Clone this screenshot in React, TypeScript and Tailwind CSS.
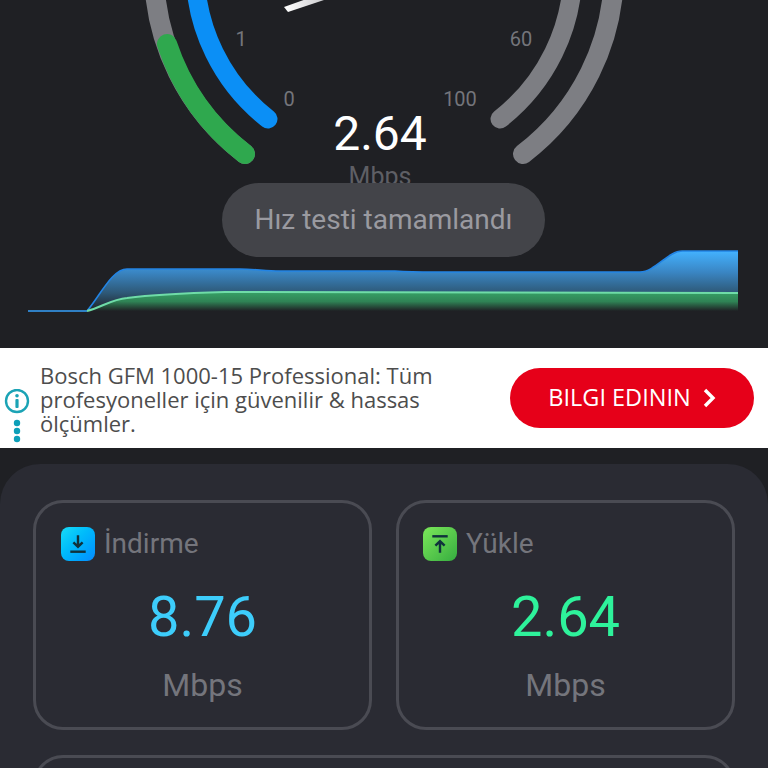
import React from "react";

function Gauge() {
  return (
    <svg width="768" height="250" viewBox="0 0 768 250" className="block" fill="none">
      <defs>
        <linearGradient id="needle" gradientUnits="userSpaceOnUse" x1="285" y1="10" x2="325" y2="-4">
          <stop offset="0" stopColor="#ffffff" />
          <stop offset="1" stopColor="#c9c9cc" />
        </linearGradient>
      </defs>
      <path d="M245 154 A231 231 0 0 1 154 -30" stroke="#7d7e83" strokeWidth="20" strokeLinecap="round" />
      <path d="M245 154 A231 231 0 0 1 167 44" stroke="#2fa84e" strokeWidth="20" strokeLinecap="round" />
      <path d="M268 119 A190 190 0 0 1 195 -30" stroke="#0b8ff6" strokeWidth="19" strokeLinecap="round" />
      <path d="M523 154 A231 231 0 0 0 614 -30" stroke="#7d7e83" strokeWidth="20" strokeLinecap="round" />
      <path d="M500 119 A190 190 0 0 0 573 -30" stroke="#7d7e83" strokeWidth="19" strokeLinecap="round" />
      <polygon points="284,7 288,12 324,0 312,-3" fill="url(#needle)" />
      <g className="font-['Roboto',sans-serif] text-[20px] fill-[#74757b]" textAnchor="middle">
        <text x="241" y="46">1</text>
        <text x="289" y="106">0</text>
        <text x="521" y="46">60</text>
        <text x="460" y="106">100</text>
      </g>
      <text x="380" y="150" textAnchor="middle" className="font-['Roboto',sans-serif] text-[48px] fill-white">2.64</text>
      <text x="380" y="185" textAnchor="middle" className="font-['Roboto',sans-serif] text-[25px] fill-[#5e5f65]">Mbps</text>
    </svg>
  );
}

function Chart() {
  return (
    <svg width="768" height="98" viewBox="0 250 768 98" className="block" fill="none">
      <defs>
        <linearGradient id="blueFill" gradientUnits="userSpaceOnUse" x1="0" y1="251" x2="0" y2="311">
          <stop offset="0" stopColor="#43b2ff" />
          <stop offset="0.35" stopColor="#3a86c4" />
          <stop offset="0.7" stopColor="#2e5876" />
          <stop offset="1" stopColor="#1f2024" />
        </linearGradient>
        <linearGradient id="greenFill" gradientUnits="userSpaceOnUse" x1="0" y1="292" x2="0" y2="311">
          <stop offset="0" stopColor="#37a066" />
          <stop offset="0.5" stopColor="#2f8355" />
          <stop offset="1" stopColor="#1f2024" />
        </linearGradient>
      </defs>
      <path
        d="M87 311 C100 296 112 269 127 269 L240 269 C255 269 265 271 280 271 L395 271 C410 272 420 272 435 272 L640 272 C655 272 668 251 682 251 L738 251 L738 311 Z"
        fill="url(#blueFill)"
      />
      <path
        d="M87 311 C100 296 112 269 127 269 L240 269 C255 269 265 271 280 271 L395 271 C410 272 420 272 435 272 L640 272 C655 272 668 251 682 251 L738 251"
        stroke="#2384e4"
        strokeWidth="1.6"
      />
      <path d="M28 311 L87 311" stroke="#2f7fc4" strokeWidth="2" />
      <path
        d="M87 311 C100 308 112 299 127 298 C150 295 190 293 225 292 L738 293 L738 311 Z"
        fill="url(#greenFill)"
      />
      <path
        d="M87 311 C100 308 112 299 127 298 C150 295 190 293 225 292 L738 293"
        stroke="#6fdca8"
        strokeWidth="2"
      />
    </svg>
  );
}

function Ad() {
  return (
    <div className="h-[100px] bg-white flex items-center font-['Open_Sans',sans-serif]">
      <div className="w-[40px] h-full pt-[41px] shrink-0">
        <svg width="34" height="58" viewBox="0 0 34 58" fill="none" className="block">
          <circle cx="17" cy="12" r="11" stroke="#1ba3b5" strokeWidth="2.4" />
          <circle cx="17" cy="6.8" r="1.8" fill="#1ba3b5" />
          <rect x="15.4" y="10" width="3.2" height="9" rx="1" fill="#1ba3b5" />
          <circle cx="17" cy="34" r="3.2" fill="#0d9fb8" />
          <circle cx="17" cy="42" r="3.2" fill="#0d9fb8" />
          <circle cx="17" cy="50" r="3.2" fill="#0d9fb8" />
        </svg>
      </div>
      <p className="w-[470px] whitespace-nowrap text-[22px] leading-[24px] text-[#4d4d4d] pt-[1px]">
        Bosch GFM 1000-15 Professional: Tüm
        <br />
        profesyoneller için güvenilir &amp; hassas
        <br />
        ölçümler.
      </p>
      <button className="w-[244px] h-[60px] rounded-full bg-[#e60019] flex items-center justify-center gap-[11px] text-white text-[23.5px]">
        <span>BILGI EDININ</span>
        <svg width="14" height="20" viewBox="0 0 14 20" fill="none">
          <path d="M3 2 L11 10 L3 18" stroke="#ffffff" strokeWidth="3.4" />
        </svg>
      </button>
    </div>
  );
}

function StatCard({ label, value, valueClass, gradient, iconClass, up }: { label: string; value: string; valueClass: string; gradient: string; iconClass: string; up?: boolean }) {
  return (
    <div className="h-[230px] rounded-[30px] border-[3px] border-[#4a4b53] px-[25px] pt-[24px]">
      <div className={`flex items-center gap-[9px] h-[34px] ${iconClass}`}>
        <div className={`w-[34px] h-[34px] rounded-[8px] flex items-center justify-center ${gradient}`}>
          <svg width="22" height="22" viewBox="0 0 20 20" fill="none" stroke="#10323c" strokeWidth="2.2">
            {up ? (
              <>
                <path d="M3 3 H17" />
                <path d="M10 18 V7.5 M5.8 11.5 L10 7.5 L14.2 11.5" />
              </>
            ) : (
              <>
                <path d="M3 17 H17" />
                <path d="M10 2 V12.5 M5.8 8.5 L10 12.5 L14.2 8.5" />
              </>
            )}
          </svg>
        </div>
        <span className="text-[28px] leading-[34px] text-[#74757c]">{label}</span>
      </div>
      <div className={`mt-[26px] text-center text-[56px] leading-[60px] ${valueClass}`}>{value}</div>
      <div className="mt-[18px] text-center text-[32px] leading-[40px] text-[#74757c]">Mbps</div>
    </div>
  );
}

export default function App() {
  return (
    <div className="w-[768px] h-[768px] overflow-hidden bg-[#1f2024] font-['Roboto',sans-serif]">
      <div className="relative h-[348px]">
        <Gauge />
        <Chart />
        <div className="absolute left-[222px] top-[183px] w-[323px] h-[74px] rounded-full bg-[#434449] flex items-center justify-center text-[28px] text-[#9a9aa0]">
          Hız testi tamamlandı
        </div>
      </div>
      <Ad />
      <div className="mt-[16px] h-[400px] rounded-t-[40px] bg-[#2a2b33] px-[33px] pt-[36px]">
        <div className="grid grid-cols-2 gap-x-[24px] gap-y-[25px]">
          <StatCard label="İndirme" value="8.76" valueClass="text-[#3dcdfb]" iconClass="ml-0" gradient="bg-gradient-to-br from-[#19dcf6] to-[#0a8cff]" />
          <StatCard label="Yükle" value="2.64" valueClass="text-[#2ef29b]" iconClass="-ml-[1px]" gradient="bg-gradient-to-br from-[#7be85a] to-[#34ad40]" up />
          <div className="col-span-2 h-[120px] rounded-[30px] border-[3px] border-[#4a4b53]" />
        </div>
      </div>
    </div>
  );
}
